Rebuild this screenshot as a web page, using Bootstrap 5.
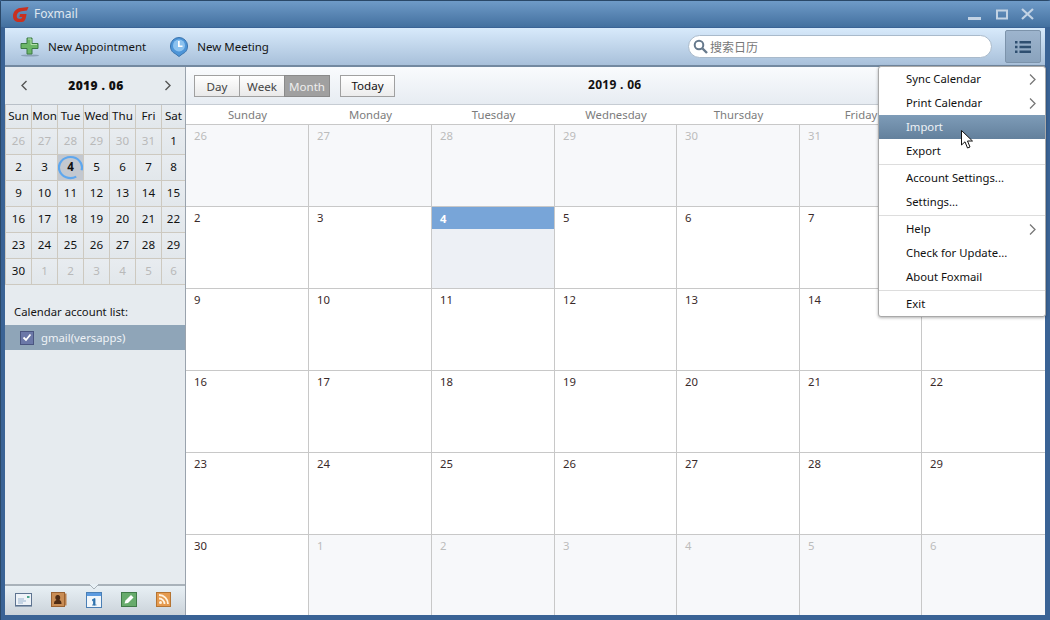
<!DOCTYPE html>
<html lang="en"><head><meta charset="utf-8"><title>Foxmail</title>
<link href="https://cdn.jsdelivr.net/npm/bootstrap@5.3.0/dist/css/bootstrap.min.css" rel="stylesheet">
<style>
html,body{margin:0;height:620px;overflow:hidden;background:#3a6395}
body{font-family:"Noto Sans","Open Sans",sans-serif;font-size:11.3px;line-height:1;color:#1a1a1a}
.fm-win{width:1050px;height:620px;position:relative;display:flex;flex-direction:column;background:#3a6395;border:1px solid #2a4868;border-width:1px 0 0 1px;border-radius:3px 3px 0 0}
.fm-title{height:26px;flex:none;background:linear-gradient(#6f9bc8,#43709f);color:#dfe7f0;padding-left:12px;gap:5px;margin-bottom:1px}
.fm-title span{font-size:12px}
.fm-winbtns{margin-left:auto;gap:13px;padding-right:16px}
.fm-winbtns svg:first-child{margin-right:2px}
.fm-content{flex:1;min-height:0;margin:0 5px 5px 4px;display:flex;flex-direction:column;background:#fff}
.fm-tool{height:39px;flex:none;background:linear-gradient(#d8eafb,#a8c0da);border-bottom:2px solid #7389a0;padding:0 4px 0 15px}
.fm-toolbtn{gap:8px;margin-right:23px;color:#141414;font-size:11.5px}
.fm-search{margin-left:auto;width:304px;height:23px;margin-right:13px;background:#fff;border:1px solid #a9bacb;border-radius:12px;padding-left:4px;gap:2px;color:#777;font-family:"Noto Sans CJK SC",sans-serif;font-size:12px}
.fm-listbtn{width:36px;height:33px;background:linear-gradient(#9db4cd,#8aa3bd);border:1px solid #7c93ab;border-radius:2px}
.fm-body{flex:1;min-height:0;display:flex}
.fm-side{width:181px;flex:none;background:#e6ebef;border-right:1px solid #9aa3ad;display:flex;flex-direction:column}
.fm-sidehead{height:37px;flex:none;padding:0 13px 0 15px;font-weight:700;color:#111}
.fm-sidehead b{font-size:12px;letter-spacing:.4px}
.fm-mini{display:grid;grid-template-columns:repeat(6,26px) 23px;grid-template-rows:24px repeat(6,26px);border-top:1px solid #b9c0c8;border-left:1px solid #cdc9c0}
.fm-mini div{display:flex;align-items:center;justify-content:center;border-right:1px solid #cdc9c0;border-bottom:1px solid #cdc9c0;padding-bottom:2px;font-size:11.6px;color:#111;background:linear-gradient(#e8ecf0,#e2e7eb)}
.fm-mini div:nth-child(7n){border-right:0}
.fm-mini .fm-off{color:#b9b9b9}
.fm-mini .fm-cur{background:#c3c8d0;font-weight:700;position:relative}
.fm-cur svg{position:absolute;left:0;top:0}
.fm-acclabel{margin:15px 0 0 9px;height:25px;padding-bottom:2px;color:#151515}
.fm-acc{height:25px;background:#8fa5b8;color:#eef2f6;padding-left:15px;gap:7px}
.fm-check{width:14px;height:14px;background:#6b78a8;border:1px solid #4a5580;display:flex;align-items:center;justify-content:center}
.fm-dock{margin-top:auto;height:31px;background:linear-gradient(#e8f0f5,#cbd3da);border-top:2px solid #a9b2ba;position:relative;padding:0 0 2px 10px;gap:19px}
.fm-dock>svg{flex:none}
.fm-dock>.fm-notch{position:absolute;left:83px;top:-2px}
.fm-main{flex:1;min-width:0;display:flex;flex-direction:column}
.fm-mainhead{height:38px;flex:none;background:linear-gradient(#f9fbfd,#e7ecf2);border-bottom:1px solid #c6ccd3;padding-left:8px;position:relative}
.btn-group>.fm-seg{width:46px;height:22px;border:1px solid #a0a0a0;background:linear-gradient(#fff,#e9e9e9);color:#444;font-size:11.6px;padding:2px 0 0}
.btn-group>.fm-seg.fm-on{background:#a0a0a0;border-color:#8a8a8a;color:#eee}
.fm-today{width:55px;height:22px;margin-left:10px;border:1px solid #a0a0a0;background:linear-gradient(#fff,#ececec);color:#111;font-size:11.6px;padding:1px 0 0}
.fm-maintitle{position:absolute;left:402px;top:12px;font-weight:700;color:#111;font-size:12px;letter-spacing:.3px}
.fm-week{height:20px;flex:none;display:grid;grid-template-columns:123px 123px 123px 122px 123px 122px 1fr;border-bottom:1px solid #c8c8c8;color:#7c7c7c;font-size:11.3px}
.fm-week div{display:flex;align-items:center;justify-content:center;padding-top:1px}
.fm-cal{flex:1;display:grid;grid-template-columns:123px 123px 123px 122px 123px 122px 1fr;grid-template-rows:repeat(5,82px) 1fr}
.fm-cal div{border-right:1px solid #c8c8c8;border-bottom:1px solid #c8c8c8;padding:5px 8px;color:#3a2a2a;font-size:11.3px}
.fm-cal div:nth-child(7n){border-right:0}
.fm-cal div:nth-last-child(-n+7){border-bottom:0}
.fm-cal .fm-off{background:#f7f8fa;color:#bcbcbc}
.fm-cal .fm-cur{padding:0;background:#edf0f5;color:#fff;font-weight:700}
.fm-cal .fm-cur span{display:block;height:22px;background:#78a5d8;padding:6px 8px}
.dropdown-menu.fm-menu{display:block;position:absolute;left:877px;top:65px;width:168px;padding:0;margin:0;border:1px solid #a9a9a9;border-radius:3px;background:#fff;box-shadow:0 1px 3px rgba(0,0,0,.3);font-size:11.3px;z-index:5}
.fm-menu .dropdown-item{height:24px;padding:0 9px 0 27px;display:flex;align-items:center;justify-content:space-between;color:#111;font-size:11.3px}
.fm-menu .dropdown-item.active{background:linear-gradient(#7e9cb8,#63809c);color:#eef2f6}
.fm-menu .dropdown-divider{margin:1px 0;border-color:#ddd;opacity:1}
.fm-cursor{position:absolute;left:960px;top:129px;z-index:6}
</style></head><body>
<div class="fm-win">
 <div class="fm-title d-flex align-items-center">
  <svg width="16" height="15" viewBox="0 0 16 15"><path d="M15.500 0 7 1C3 1.500 0 5 0 9c0 3.500 2 6 5.500 6H9c2.500 0 4-3 4.500-8H7L6.300 10h3c-.3 1-1 1.800-2 1.800H6C4.500 11.800 3.500 10.500 3.800 8.500 4.200 6 6 4.500 8.500 4.200L14 3.500Z" fill="#c9301f"/></svg>
  <span>Foxmail</span>
  <div class="fm-winbtns d-flex align-items-center">
   <svg width="13" height="13" viewBox="0 0 13 13"><rect y="9" width="13" height="3" fill="#c3d3e4"/></svg>
   <svg width="12" height="11" viewBox="0 0 12 11"><rect x="1" y="1.500" width="10" height="8" fill="none" stroke="#c3d3e4" stroke-width="2"/></svg>
   <svg width="13" height="12" viewBox="0 0 13 12"><path d="M1 1 12 11M12 1 1 11" stroke="#c3d3e4" stroke-width="2.200"/></svg>
  </div>
 </div>
 <div class="fm-content">
  <div class="fm-tool d-flex align-items-center">
   <div class="fm-toolbtn d-flex align-items-center">
    <svg width="20" height="20" viewBox="0 0 20 20"><ellipse cx="10" cy="18.500" rx="9" ry="1" fill="#8ba2b8"/><path d="M7 1h5v5.500h6v5h-6V17H7v-5.500H1v-5h6Z" fill="#6cb668" stroke="#3c7a45"/><path d="M8 2h3v5.500h6" fill="none" stroke="#b3dfaa"/></svg>
    <span>New Appointment</span>
   </div>
   <div class="fm-toolbtn d-flex align-items-center">
    <svg width="20" height="22" viewBox="0 0 20 22"><path d="M10 20.500 6 17.500C2.500 16 1.500 13 1.500 10a8.500 8.500 0 0 1 17 0c0 3-1 6-4.500 7.500Z" fill="#4d95d8" stroke="#3a74ae"/><circle cx="10" cy="9.500" r="6" fill="#8cc2ef"/><path d="M9 5v6h4.500V9.500H10.700V5Z" fill="#fff"/></svg>
    <span>New Meeting</span>
   </div>
   <div class="fm-search d-flex align-items-center ms-auto">
    <svg width="15" height="15" viewBox="0 0 15 15"><circle cx="6" cy="6" r="4.300" fill="none" stroke="#66798c" stroke-width="2"/><path d="M9.500 9.500 14 14" stroke="#66798c" stroke-width="2.400"/></svg>
    <span>搜索日历</span>
   </div>
   <div class="fm-listbtn d-flex align-items-center justify-content-center">
    <svg width="16" height="12" viewBox="0 0 16 12"><path d="M0 0h2.500v2.500H0ZM0 4.700h2.500v2.500H0ZM0 9.400h2.500v2.500H0ZM4.500 0H16v2.500H4.500ZM4.500 4.700H16v2.500H4.500ZM4.500 9.400H16v2.500H4.500Z" fill="#2f4f70"/></svg>
   </div>
  </div>
  <div class="fm-body">
   <div class="fm-side">
    <div class="fm-sidehead d-flex align-items-center justify-content-between">
     <svg width="8" height="11" viewBox="0 0 8 11"><path d="M6.500 1 2 5.500 6.500 10" fill="none" stroke="#555" stroke-width="1.400"/></svg>
     <b>2019 . 06</b>
     <svg width="8" height="11" viewBox="0 0 8 11"><path d="M1.500 1 6 5.500 1.500 10" fill="none" stroke="#555" stroke-width="1.400"/></svg>
    </div>
    <div class="fm-mini">
     <div>Sun</div><div>Mon</div><div>Tue</div><div>Wed</div><div>Thu</div><div>Fri</div><div>Sat</div>
     <div class="fm-off">26</div><div class="fm-off">27</div><div class="fm-off">28</div><div class="fm-off">29</div><div class="fm-off">30</div><div class="fm-off">31</div><div>1</div>
     <div>2</div><div>3</div><div class="fm-cur"><svg width="25" height="25" viewBox="0 0 25 25"><path d="M18.250 21.600A11.500 10.500 0 1 1 23.600 15.200" fill="none" stroke="#5ea7ee" stroke-width="2.200"/></svg>4</div><div>5</div><div>6</div><div>7</div><div>8</div>
     <div>9</div><div>10</div><div>11</div><div>12</div><div>13</div><div>14</div><div>15</div>
     <div>16</div><div>17</div><div>18</div><div>19</div><div>20</div><div>21</div><div>22</div>
     <div>23</div><div>24</div><div>25</div><div>26</div><div>27</div><div>28</div><div>29</div>
     <div>30</div><div class="fm-off">1</div><div class="fm-off">2</div><div class="fm-off">3</div><div class="fm-off">4</div><div class="fm-off">5</div><div class="fm-off">6</div>
    </div>
    <div class="fm-acclabel d-flex align-items-center">Calendar account list:</div>
    <div class="fm-acc d-flex align-items-center">
     <span class="fm-check"><svg width="10" height="9" viewBox="0 0 10 9"><path d="M1.500 4.500 4 7 8.500 1.500" fill="none" stroke="#fff" stroke-width="1.800"/></svg></span>
     <span>gmail(versapps)</span>
    </div>
    <div class="fm-dock d-flex align-items-center">
     <svg class="fm-notch" width="12" height="6" viewBox="0 0 12 6"><path d="M1 0 6 5 11 0" fill="#e8f0f5" stroke="#a9b2ba"/></svg>
     <svg width="17" height="14" viewBox="0 0 17 14"><rect x=".5" y=".5" width="16" height="12" fill="#eef3f8" stroke="#5d7390"/><path d="M0 13.500h17" stroke="#8fa0b4"/><rect x="12" y="3" width="2.500" height="2" fill="#4aa58c"/><path d="M3 6h6M3 8h8M3 10h5" stroke="#9ab4cf"/></svg>
     <svg width="16" height="15" viewBox="0 0 16 15"><rect x=".5" y=".5" width="13" height="14" fill="#c98d55" stroke="#9a6232"/><rect x="14" y="1.500" width="1.500" height="12" fill="#b97f4b"/><path d="M3 12c0-3 1.500-3.500 2.500-4C4.500 7 4 6 4.500 4.500c.5-2 4-2 4.500 0C9.500 6 9 7 8.500 8c1 .5 2 1 2 4Z" fill="#4e2c15"/></svg>
     <svg width="16" height="16" viewBox="0 0 16 16"><rect x=".5" y=".5" width="15" height="15" fill="#f2f7fb" stroke="#4a7fb5"/><rect x="1" y="1" width="14" height="3" fill="#5c9be0"/><path d="M6.500 7.500 9 6.500V13H7.500V8.500l-1 .3ZM6 13h4.500" fill="#2f72ad" stroke="#2f72ad" stroke-width=".8"/></svg>
     <svg width="16" height="15" viewBox="0 0 16 15"><rect x=".5" y=".5" width="15" height="14" fill="#67ab6c" stroke="#407a48"/><path d="M3.500 11.500 4.500 8.500 10 3l2.500 2.500L7 11Z" fill="#fff"/></svg>
     <svg width="15" height="15" viewBox="0 0 15 15"><rect x=".5" y=".5" width="14" height="14" fill="#e59a4e" stroke="#b57432"/><circle cx="4.500" cy="10.500" r="1.500" fill="#fff3e0"/><path d="M3 6.500a5.500 5.500 0 0 1 5.500 5.500M3 3a9 9 0 0 1 9 9" fill="none" stroke="#fff3e0" stroke-width="1.800"/></svg>
    </div>
   </div>
   <div class="fm-main">
    <div class="fm-mainhead d-flex align-items-center">
     <div class="btn-group">
      <button type="button" class="btn rounded-0 fm-seg">Day</button>
      <button type="button" class="btn rounded-0 fm-seg">Week</button>
      <button type="button" class="btn rounded-0 fm-seg fm-on">Month</button>
     </div>
     <button type="button" class="btn rounded-0 fm-today">Today</button>
     <b class="fm-maintitle">2019 . 06</b>
    </div>
    <div class="fm-week"><div>Sunday</div><div>Monday</div><div>Tuesday</div><div>Wednesday</div><div>Thursday</div><div>Friday</div><div>Saturday</div></div>
    <div class="fm-cal">
     <div class="fm-off">26</div><div class="fm-off">27</div><div class="fm-off">28</div><div class="fm-off">29</div><div class="fm-off">30</div><div class="fm-off">31</div><div>1</div>
     <div>2</div><div>3</div><div class="fm-cur"><span>4</span></div><div>5</div><div>6</div><div>7</div><div>8</div>
     <div>9</div><div>10</div><div>11</div><div>12</div><div>13</div><div>14</div><div>15</div>
     <div>16</div><div>17</div><div>18</div><div>19</div><div>20</div><div>21</div><div>22</div>
     <div>23</div><div>24</div><div>25</div><div>26</div><div>27</div><div>28</div><div>29</div>
     <div>30</div><div class="fm-off">1</div><div class="fm-off">2</div><div class="fm-off">3</div><div class="fm-off">4</div><div class="fm-off">5</div><div class="fm-off">6</div>
    </div>
   </div>
  </div>
 </div>
 <div class="dropdown-menu fm-menu">
  <a class="dropdown-item" href="#">Sync Calendar<svg width="7" height="11" viewBox="0 0 7 11"><path d="M1 .5 6 5.500 1 10.500" fill="none" stroke="#777" stroke-width="1.300"/></svg></a>
  <a class="dropdown-item" href="#">Print Calendar<svg width="7" height="11" viewBox="0 0 7 11"><path d="M1 .5 6 5.500 1 10.500" fill="none" stroke="#777" stroke-width="1.300"/></svg></a>
  <a class="dropdown-item active" href="#">Import</a>
  <a class="dropdown-item" href="#">Export</a>
  <hr class="dropdown-divider">
  <a class="dropdown-item" href="#">Account Settings...</a>
  <a class="dropdown-item" href="#">Settings...</a>
  <hr class="dropdown-divider">
  <a class="dropdown-item" href="#">Help<svg width="7" height="11" viewBox="0 0 7 11"><path d="M1 .5 6 5.500 1 10.500" fill="none" stroke="#777" stroke-width="1.300"/></svg></a>
  <a class="dropdown-item" href="#">Check for Update...</a>
  <a class="dropdown-item" href="#">About Foxmail</a>
  <hr class="dropdown-divider">
  <a class="dropdown-item" href="#">Exit</a>
 </div>
 <svg class="fm-cursor" width="13" height="19" viewBox="0 0 13 19"><path d="M.5.5V15l3.500-3.200L6.500 18 9 17 6.500 11H11.500Z" fill="#fff" stroke="#111"/></svg>
</div>
</body></html>
